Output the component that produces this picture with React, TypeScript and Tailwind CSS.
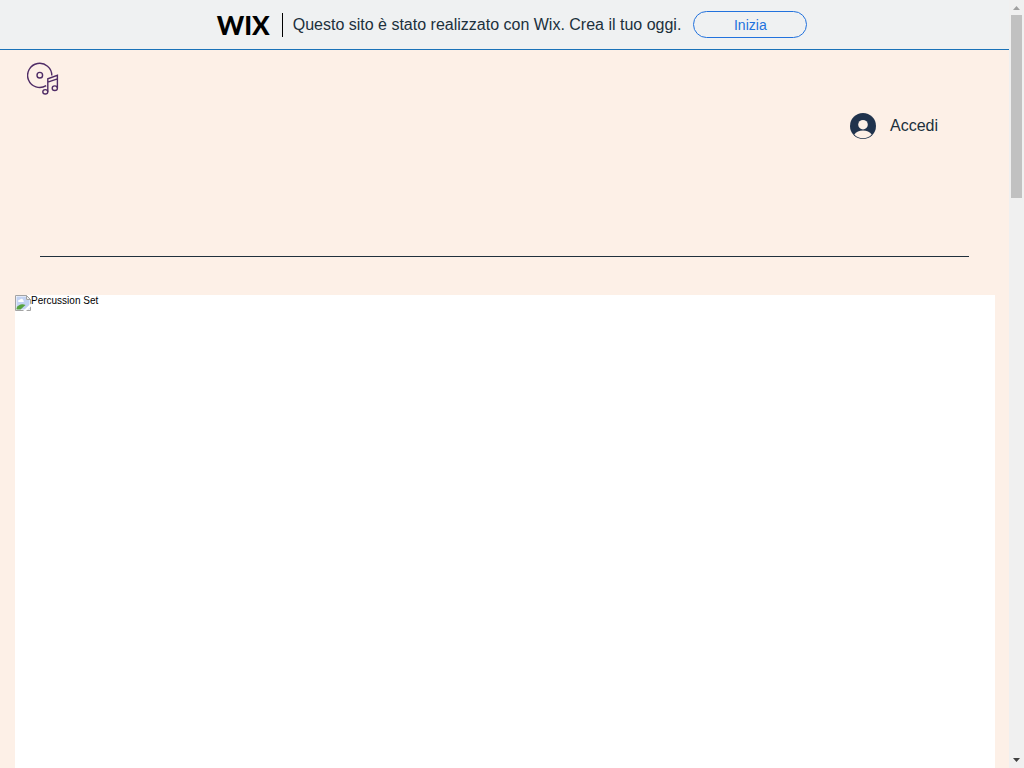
function WixBanner() {
  return (
    <header className="flex h-[50px] items-center justify-center border-b border-[#1a72b8] bg-[#eff1f2] pl-[15px]">
      <span className="font-[Lato] text-[26px] leading-none font-black text-black">WIX</span>
      <span className="ml-3 h-6 w-px bg-black" aria-hidden="true" />
      <p className="ml-[10px] text-base text-[#20303c]">
        Questo sito è stato realizzato con Wix. Crea il tuo oggi.
      </p>
      <a
        href="#inizia"
        className="ml-3 flex h-[27px] w-[114px] items-center justify-center rounded-full border border-[#2272dd] text-sm text-[#2272dd]"
      >
        Inizia
      </a>
    </header>
  );
}

function MusicLogo() {
  return (
    <svg width="32" height="34" viewBox="0 0 32 34" fill="none" stroke="#4f2c66" strokeWidth="1.4" aria-hidden="true">
      <path d="M19.2 23.6A12.1 12.1 0 1 1 24.8 13.6" />
      <circle cx="12.8" cy="13.2" r="2.8" />
      <path d="M20.8 29.8V16.8L30.4 13.3V26.1M20.8 20.2L30.4 16.9" />
      <ellipse cx="18.3" cy="29.8" rx="2.5" ry="2.2" />
      <ellipse cx="27.8" cy="26.2" rx="2.6" ry="2.3" />
    </svg>
  );
}

function LoginButton() {
  return (
    <button type="button" className="flex items-center gap-[14px] text-base text-[#20303c]">
      <svg width="26" height="26" viewBox="0 0 26 26" aria-hidden="true">
        <circle cx="13" cy="13" r="13" fill="#20334d" />
        <circle cx="13" cy="11.7" r="4.8" fill="#fdf0e7" />
        <path d="M4.3 21.4C6.2 18.9 9.3 17.5 13 17.5s6.8 1.4 8.7 3.9A12.2 12.2 0 0 1 13 25.2a12.2 12.2 0 0 1-8.7-3.8Z" fill="#fdf0e7" />
      </svg>
      Accedi
    </button>
  );
}

function MissingImageIcon() {
  return (
    <svg width="16" height="16" viewBox="0 0 16 16" aria-hidden="true">
      <path d="M.5.5h11l4 4v11H.5Z" fill="#fff" stroke="#a3a3a3" />
      <path d="M1.5 1.5h9.5v3.5h3.5v9.5h-13Z" fill="#c2d2f2" />
      <path d="M3 6.5c0-1.5 1-2 2-1.7.5-1.5 3-1.3 3 .4 1.2 0 1.2 1.8 0 1.8H4Z" fill="#fff" />
      <path d="M1.5 14.5V13c2-3.5 5.5-4.5 9-3l-5 4.5Z" fill="#57a33e" />
      <path d="M16 8.5 8 16h3l5-4.5Z" fill="#fff" />
      <path d="M11.5.5v4h4Z" fill="#eee" stroke="#a3a3a3" />
    </svg>
  );
}

function ScrollRail() {
  return (
    <aside className="flex w-[15px] shrink-0 flex-col items-center justify-between bg-[#f0f0f0]" aria-hidden="true">
      <div className="flex w-full flex-col items-center">
        <svg className="my-[5px]" width="7" height="5" viewBox="0 0 7 5">
          <path d="M0 5 3.5 1 7 5Z" fill="#a0a0a0" />
        </svg>
        <div className="h-[183px] w-[11px] bg-[#c1c1c1]" />
      </div>
      <svg className="my-[5px]" width="7" height="5" viewBox="0 0 7 5">
        <path d="M0 0 3.5 4 7 0Z" fill="#404040" />
      </svg>
    </aside>
  );
}

export default function App() {
  return (
    <div className="flex min-h-screen font-['Liberation_Sans',Arial,sans-serif]">
      <div className="flex min-w-0 flex-1 flex-col bg-[#fdf0e7]">
        <WixBanner />
        <div className="px-[27px] pt-3">
          <a href="#home" className="inline-block align-top" aria-label="Home">
            <MusicLogo />
          </a>
        </div>
        <div className="flex justify-end pt-[17px] pr-[71px]">
          <LoginButton />
        </div>
        <hr className="mx-10 mt-[117px] border-t border-[#20303c]" />
        <main className="mt-[38px] flex flex-1 px-[15px] pr-[14px]">
          <div className="flex flex-1 items-start bg-white text-[10px] leading-3 text-black">
            <MissingImageIcon />
            <span>Percussion Set</span>
          </div>
        </main>
      </div>
      <ScrollRail />
    </div>
  );
}
